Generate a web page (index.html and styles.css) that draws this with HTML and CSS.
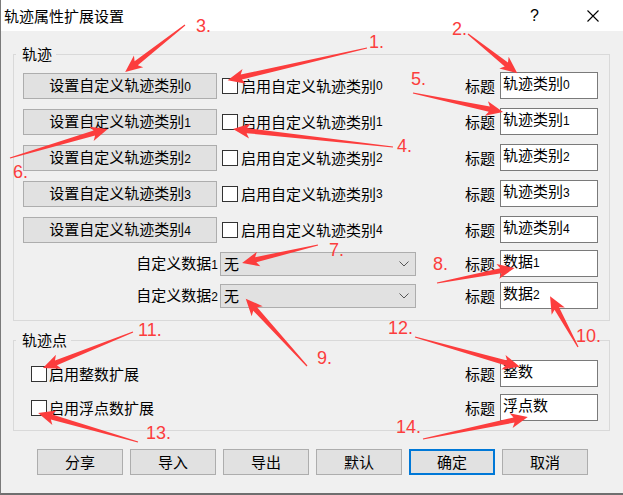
FILE: index.html
```html
<!DOCTYPE html>
<html lang="zh-CN">
<head>
<meta charset="utf-8">
<title>轨迹属性扩展设置</title>
<link rel="stylesheet" href="styles.css">
</head>
<body>
<div class="win">
  <div class="titlebar">
    <span class="title">轨迹属性扩展设置</span>
    <span class="help">?</span>
    <span class="close"><svg width="12" height="12" viewBox="0 0 12 12"><path d="M0.5 0.5 L11.5 11.5 M11.5 0.5 L0.5 11.5" stroke="#000" stroke-width="1.1" fill="none"/></svg></span>
  </div>
  <div class="client">
    <fieldset class="grp g1">
      <legend>轨迹</legend>
      <div class="row">
        <button class="btn wide">设置自定义轨迹类别<span class="d">0</span></button>
        <label class="chk"><span class="box"></span>启用自定义轨迹类别<span class="d">0</span></label>
        <span class="cap">标题</span><div class="edit">轨迹类别<span class="d">0</span></div>
      </div>
      <div class="row">
        <button class="btn wide">设置自定义轨迹类别<span class="d">1</span></button>
        <label class="chk"><span class="box"></span>启用自定义轨迹类别<span class="d">1</span></label>
        <span class="cap">标题</span><div class="edit">轨迹类别<span class="d">1</span></div>
      </div>
      <div class="row">
        <button class="btn wide">设置自定义轨迹类别<span class="d">2</span></button>
        <label class="chk"><span class="box"></span>启用自定义轨迹类别<span class="d">2</span></label>
        <span class="cap">标题</span><div class="edit">轨迹类别<span class="d">2</span></div>
      </div>
      <div class="row">
        <button class="btn wide">设置自定义轨迹类别<span class="d">3</span></button>
        <label class="chk"><span class="box"></span>启用自定义轨迹类别<span class="d">3</span></label>
        <span class="cap">标题</span><div class="edit">轨迹类别<span class="d">3</span></div>
      </div>
      <div class="row">
        <button class="btn wide">设置自定义轨迹类别<span class="d">4</span></button>
        <label class="chk"><span class="box"></span>启用自定义轨迹类别<span class="d">4</span></label>
        <span class="cap">标题</span><div class="edit">轨迹类别<span class="d">4</span></div>
      </div>
      <div class="row crow1">
        <span class="clabel">自定义数据<span class="d">1</span></span>
        <div class="combo"><span>无</span><svg width="10" height="6" viewBox="0 0 10 6"><path d="M0.5 0.5 L5 5 L9.5 0.5" stroke="#555" stroke-width="1" fill="none"/></svg></div>
        <span class="cap">标题</span><div class="edit">数据<span class="d">1</span></div>
      </div>
      <div class="row crow2">
        <span class="clabel">自定义数据<span class="d">2</span></span>
        <div class="combo"><span>无</span><svg width="10" height="6" viewBox="0 0 10 6"><path d="M0.5 0.5 L5 5 L9.5 0.5" stroke="#555" stroke-width="1" fill="none"/></svg></div>
        <span class="cap">标题</span><div class="edit">数据<span class="d">2</span></div>
      </div>
    </fieldset>
    <fieldset class="grp g2">
      <legend>轨迹点</legend>
      <div class="row">
        <label class="chk tight"><span class="box"></span>启用整数扩展</label>
        <span class="cap">标题</span><div class="edit">整数</div>
      </div>
      <div class="row r2">
        <label class="chk tight"><span class="box"></span>启用浮点数扩展</label>
        <span class="cap">标题</span><div class="edit">浮点数</div>
      </div>
    </fieldset>
    <div class="actions">
      <button class="btn act">分享</button>
      <button class="btn act">导入</button>
      <button class="btn act">导出</button>
      <button class="btn act">默认</button>
      <button class="btn act def">确定</button>
      <button class="btn act">取消</button>
    </div>
  </div>

  <div class="annot">
    <svg class="arrows" width="623" height="495" viewBox="0 0 623 495">
      <g fill="#fc3d3d">
        <polygon transform="translate(185 25) rotate(141.9)" points="0,-.6 62,-2.6 59,-7.5 76,0 59,7.5 62,2.6 0,.6"/>
        <polygon transform="translate(367 48) rotate(167)" points="0,-.6 129,-2.6 126,-7.5 143,0 126,7.5 129,2.6 0,.6"/>
        <polygon transform="translate(468 34) rotate(38.5)" points="0,-.6 49,-2.6 46,-7.5 63,0 46,7.5 49,2.6 0,.6"/>
        <polygon transform="translate(413 93) rotate(11.9)" points="0,-.6 78,-2.6 75,-7.5 92,0 75,7.5 78,2.6 0,.6"/>
        <polygon transform="translate(393 147) rotate(186.4)" points="0,-.6 147,-2.6 144,-7.5 161,0 144,7.5 147,2.6 0,.6"/>
        <polygon transform="translate(10 158) rotate(-16.5)" points="0,-.6 88,-2.6 85,-7.5 102,0 85,7.5 88,2.6 0,.6"/>
        <polygon transform="translate(318 245) rotate(166.7)" points="0,-.6 64,-2.6 61,-7.5 78,0 61,7.5 64,2.6 0,.6"/>
        <polygon transform="translate(437 283) rotate(-10.9)" points="0,-.6 65,-2.6 62,-7.5 79,0 62,7.5 65,2.6 0,.6"/>
        <polygon transform="translate(307 366) rotate(227.7)" points="0,-.6 77,-2.6 74,-7.5 91,0 74,7.5 77,2.6 0,.6"/>
        <polygon transform="translate(578 347) rotate(241.2)" points="0,-.6 44,-2.6 41,-7.5 58,0 41,7.5 44,2.6 0,.6"/>
        <polygon transform="translate(133 332) rotate(158.2)" points="0,-.6 83,-2.6 80,-7.5 97,0 80,7.5 83,2.6 0,.6"/>
        <polygon transform="translate(415 337) rotate(15.9)" points="0,-.6 95,-2.6 92,-7.5 109,0 92,7.5 95,2.6 0,.6"/>
        <polygon transform="translate(138 442) rotate(196.2)" points="0,-.6 90,-2.6 87,-7.5 104,0 87,7.5 90,2.6 0,.6"/>
        <polygon transform="translate(423 439) rotate(-11.8)" points="0,-.6 93,-2.6 90,-7.5 107,0 90,7.5 93,2.6 0,.6"/>
      </g>
    </svg>
    <span class="num n1">1.</span>
    <span class="num n2">2.</span>
    <span class="num n3">3.</span>
    <span class="num n4">4.</span>
    <span class="num n5">5.</span>
    <span class="num n6">6.</span>
    <span class="num n7">7.</span>
    <span class="num n8">8.</span>
    <span class="num n9">9.</span>
    <span class="num n10">10.</span>
    <span class="num n11">11.</span>
    <span class="num n12">12.</span>
    <span class="num n13">13.</span>
    <span class="num n14">14.</span>
  </div>
</div>
</body>
</html>
```
FILE: styles.css
```css
* { box-sizing: border-box; }
html, body { margin: 0; padding: 0; }
body {
  width: 623px;
  height: 495px;
  overflow: hidden;
  background: #f0f0f0;
  font-family: "Noto Sans CJK SC", "Noto Sans", sans-serif;
  font-size: 15px;
  color: #000;
}
.win {
  position: relative;
  width: 623px;
  height: 495px;
  background: #f0f0f0;
  border-left: 1px solid #7a7a7a;
  border-bottom: 2px solid #6f6f6f;
}
.titlebar {
  height: 31px;
  background: #fff;
  display: flex;
  align-items: center;
  padding-left: 3px;
}
.title { font-size: 15px; line-height: 18px; }
.help {
  margin-left: auto;
  font-family: "Liberation Sans", sans-serif;
  font-size: 16px;
  line-height: 18px;
  width: 10px;
}
.close {
  display: flex;
  margin-left: 47px;
  margin-right: 24px;
}
.d {
  font-family: "Liberation Sans", sans-serif;
  font-size: 12px;
}
.client {
  padding-left: 12px;
}
.grp {
  margin: 0;
  min-width: 0;
  width: 597px;
  border: 1px solid #d9d9d9;
  padding: 0 11px 0 0;
}
.grp legend {
  font-size: 15px;
  line-height: 16px;
  margin-left: 2px;
  padding: 0 4px 0 6px;
}
.g1 { margin-top: 15px; padding-top: 10px; padding-bottom: 11px; }
.g2 { margin-top: 11px; padding-top: 12px; padding-bottom: 9px; }
.row {
  display: flex;
  align-items: center;
  height: 27px;
}
.g1 .row + .row { margin-top: 9px; }
.g1 .row.crow1 { margin-top: 7px; }
.g1 .row.crow2 { margin-top: 5px; }
.g2 .row.r2 { margin-top: 7px; }
.btn {
  font-family: "Noto Sans CJK SC", sans-serif;
  font-size: 15px;
  line-height: 18px;
  background: #e1e1e1;
  border: 1px solid #adadad;
  padding: 0;
  margin: 0;
  height: 26px;
  color: #000;
  text-align: center;
}
.btn.wide { width: 194px; margin-left: 9px; }
.chk {
  display: flex;
  align-items: center;
  margin-left: 5px;
  flex: 1;
  line-height: 18px;
}
.chk .box {
  width: 16px;
  height: 16px;
  border: 1px solid #333;
  background: #fff;
  margin-right: 3px;
  flex: none;
}
.chk.tight { margin-left: 17px; }
.chk.tight .box { margin-right: 2px; }
.cap {
  line-height: 18px;
  margin-right: 5px;
}
.edit {
  width: 98px;
  height: 27px;
  border: 1px solid #7a7a7a;
  background: #fff;
  padding: 1px 0 0 2px;
  line-height: 18px;
  white-space: nowrap;
  align-self: center;
}
.clabel {
  width: 204px;
  text-align: right;
  line-height: 18px;
}
.combo {
  width: 196px;
  height: 24px;
  margin-left: 2px;
  background: #e1e1e1;
  border: 1px solid #adadad;
  display: flex;
  align-items: center;
  justify-content: space-between;
  padding: 0 6px 0 3px;
  line-height: 18px;
  margin-right: auto;
}
.combo svg { display: block; }
.actions {
  display: flex;
  gap: 7px;
  margin-top: 18px;
  padding-left: 24px;
}
.btn.act { width: 86px; }
.btn.def { border: 2px solid #0078d7; }

.annot {
  position: absolute;
  left: -1px;
  top: 0;
  width: 623px;
  height: 495px;
  pointer-events: none;
}
.arrows { position: absolute; left: 0; top: 0; }
.num {
  position: absolute;
  font-family: "Liberation Sans", sans-serif;
  font-size: 18px;
  line-height: 18px;
  color: #fc3d3d;
  white-space: nowrap;
}
.n1 { left: 369px; top: 33px; }
.n2 { left: 452px; top: 20px; }
.n3 { left: 196px; top: 17px; }
.n4 { left: 397px; top: 137px; }
.n5 { left: 411px; top: 70px; }
.n6 { left: 13px; top: 163px; }
.n7 { left: 329px; top: 241px; }
.n8 { left: 433px; top: 255px; }
.n9 { left: 317px; top: 349px; }
.n10 { left: 576px; top: 327px; }
.n11 { left: 138px; top: 321px; }
.n12 { left: 388px; top: 319px; }
.n13 { left: 146px; top: 424px; }
.n14 { left: 396px; top: 418px; }
```
